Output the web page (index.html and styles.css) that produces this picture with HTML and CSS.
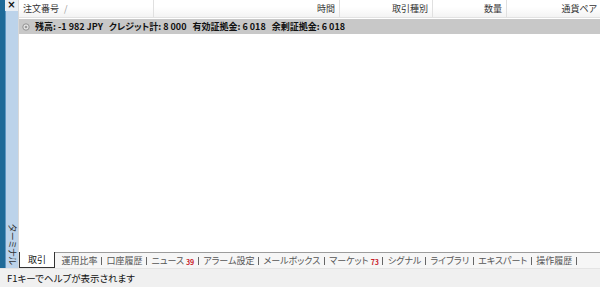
FILE: index.html
```html
<!DOCTYPE html>
<html lang="ja">
<head>
    <meta charset="UTF-8">
    <title>ターミナル</title>
    <link rel="stylesheet" href="styles.css">
</head>
<body>
    <div class="window">
        <div class="main">
            <div class="sidebar">
                <div class="close">×</div>
                <div class="side-title">ターミナル</div>
            </div>

            <div class="panel">
                <div class="grid-head">
                    <div class="col col-order">注文番号 <span class="sort">/</span></div>
                    <div class="col col-time">時間</div>
                    <div class="col col-type">取引種別</div>
                    <div class="col col-qty">数量</div>
                    <div class="col col-pair">通貨ペア</div>
                </div>

                <div class="balance-row">
                    <svg class="balance-icon" width="8" height="8" viewBox="0 0 8 8">
                        <circle cx="4" cy="4" r="3.2" fill="#e4e4e4" stroke="#8a8a8a" stroke-width="0.9"/>
                        <circle cx="4" cy="4" r="1.3" fill="#9a9a9a"/>
                    </svg>
                    <span>残高: -1 982 JPY</span>
                    <span>クレジット計: 8 000</span>
                    <span>有効証拠金: 6 018</span>
                    <span>余剰証拠金: 6 018</span>
                </div>

                <div class="grid-body"></div>

                <div class="tabs">
                    <div class="tab active">取引</div>
                    <div class="tab">運用比率</div>
                    <div class="tab">口座履歴</div>
                    <div class="tab">ニュース<span class="count">39</span></div>
                    <div class="tab">アラーム設定</div>
                    <div class="tab">メールボックス</div>
                    <div class="tab">マーケット<span class="count">73</span></div>
                    <div class="tab">シグナル</div>
                    <div class="tab">ライブラリ</div>
                    <div class="tab">エキスパート</div>
                    <div class="tab">操作履歴</div>
                </div>
            </div>
        </div>

        <div class="status">F1キーでヘルプが表示されます</div>
    </div>
</body>
</html>
```

FILE: styles.css
```css
* {
    margin: 0;
    padding: 0;
    box-sizing: border-box;
}

body {
    width: 600px;
    height: 287px;
    overflow: hidden;
    background: #fff;
    font-family: "Noto Sans CJK JP", "Liberation Sans", sans-serif;
    font-feature-settings: "palt";
    color: #222;
}

.window {
    display: flex;
    flex-direction: column;
    height: 287px;
}

.main {
    display: flex;
    height: 268px;
}

/* left docked bar */
.sidebar {
    width: 18px;
    flex-shrink: 0;
    display: flex;
    flex-direction: column;
    justify-content: space-between;
    background: #bcd3ea;
    border-left: 5px solid #1e6a98;
    box-shadow: inset 1px 0 0 #5f97c2;
}

.close {
    height: 11px;
    background: #e9eef4;
    font-size: 10px;
    line-height: 9px;
    font-weight: bold;
    text-align: center;
    color: #111;
    font-family: "DejaVu Sans", sans-serif;
}

.side-title {
    writing-mode: vertical-rl;
    text-orientation: sideways;
    font-size: 9px;
    line-height: 12px;
    color: #333;
    padding-bottom: 3px;
    align-self: center;
}

.panel {
    flex: 1;
    min-width: 0;
    display: flex;
    flex-direction: column;
    border-left: 1px solid #d8d8d8;
}

.grid-head {
    display: flex;
    height: 18px;
    background: linear-gradient(#ffffff 40%, #f3f3f3);
    border-bottom: 1px solid #e2e2e2;
    font-size: 9px;
    color: #333;
}

.col {
    display: flex;
    align-items: center;
    justify-content: flex-end;
    padding: 0 4px;
    border-right: 1px solid #e0e0e0;
    white-space: nowrap;
}

.col-order {
    width: 135px;
    justify-content: flex-start;
    padding-left: 4px;
}

.sort {
    color: #999;
    margin-left: 5px;
}

.col-time { width: 186px; }
.col-type { width: 93px; }
.col-qty { width: 74px; }
.col-pair { flex: 1; border-right: none; padding-right: 3px; }

.balance-row {
    display: flex;
    align-items: center;
    gap: 6px;
    height: 15px;
    margin-top: 1px;
    padding-left: 3px;
    background: #c8c8c8;
    font-size: 9px;
    font-weight: bold;
    color: #111;
    white-space: nowrap;
}

.balance-icon {
    margin-right: -1px;
}

.grid-body {
    flex: 1;
}

.tabs {
    display: flex;
    height: 16px;
    border-top: 1px solid #9c9c9c;
    background: #f6f6f6;
    font-size: 9px;
}

.tab {
    display: flex;
    align-items: center;
    flex-shrink: 0;
    white-space: nowrap;
    padding: 0 4.5px;
    color: #555;
    position: relative;
}

.tab::after {
    content: "";
    position: absolute;
    right: 0;
    top: 4px;
    height: 8px;
    border-right: 1px solid #666;
}

.tab.active {
    margin-top: -1px;
    background: #fff;
    color: #111;
    padding: 0 8px;
    border: 1px solid #333;
    border-top: none;
    margin-right: 2px;
}

.tab.active::after {
    display: none;
}

.count {
    color: #c8202a;
    font-size: 7px;
    font-weight: bold;
    margin-left: 2px;
    margin-top: 2px;
}

.status {
    flex: 1;
    display: flex;
    align-items: center;
    padding-left: 7px;
    background: #f0f0f0;
    border-top: 1px solid #e4e4e4;
    font-size: 9.5px;
    color: #111;
}
```
